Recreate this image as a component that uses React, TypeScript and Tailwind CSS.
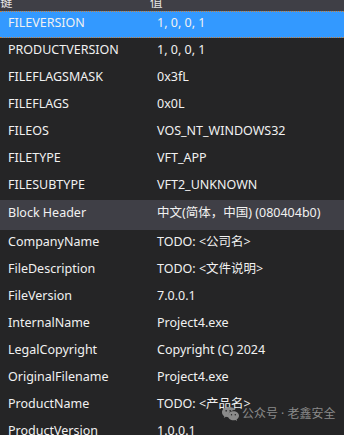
import React from "react";

type Row = { key: string; value: string; selected?: boolean; block?: boolean };

const rows: Row[] = [
  { key: "FILEVERSION", value: "1, 0, 0, 1", selected: true },
  { key: "PRODUCTVERSION", value: "1, 0, 0, 1" },
  { key: "FILEFLAGSMASK", value: "0x3fL" },
  { key: "FILEFLAGS", value: "0x0L" },
  { key: "FILEOS", value: "VOS_NT_WINDOWS32" },
  { key: "FILETYPE", value: "VFT_APP" },
  { key: "FILESUBTYPE", value: "VFT2_UNKNOWN" },
  { key: "Block Header", value: "中文(简体，中国) (080404b0)", block: true },
  { key: "CompanyName", value: "TODO: <公司名>" },
  { key: "FileDescription", value: "TODO: <文件说明>" },
  { key: "FileVersion", value: "7.0.0.1" },
  { key: "InternalName", value: "Project4.exe" },
  { key: "LegalCopyright", value: "Copyright (C) 2024" },
  { key: "OriginalFilename", value: "Project4.exe" },
  { key: "ProductName", value: "TODO: <产品名>" },
  { key: "ProductVersion", value: "1.0.0.1" },
];

const WeChatIcon = () => (
  <svg width="17" height="15" viewBox="0 0 34 30" className="shrink-0 fill-[#8a8a8a]">
    <path d="M12.5 2C5.6 2 0 6.6 0 12.3c0 3.2 1.8 6.1 4.6 8l-1.1 3.6 4.2-2.2c1.5.4 3.1.7 4.8.7h.9c-.3-1-.5-2-.5-3.1 0-6.3 5.9-11.2 13.2-11.2h.8C25.5 4 19.6 2 12.5 2z" />
    <path d="M34 19.4c0-5-5-9-11.1-9s-11.1 4-11.1 9 5 9 11.1 9c1.3 0 2.6-.2 3.8-.5l3.5 1.9-.9-3.1c2.8-1.7 4.7-4.3 4.7-7.3z" />
    <circle cx="8.4" cy="9.5" r="1.7" className="fill-[#252526]" />
    <circle cx="16.4" cy="9.5" r="1.7" className="fill-[#252526]" />
    <circle cx="19" cy="17.5" r="1.4" className="fill-[#252526]" />
    <circle cx="26.6" cy="17.5" r="1.4" className="fill-[#252526]" />
  </svg>
);

export default function App() {
  return (
    <div
      className="relative w-[344px] h-[435px] overflow-hidden bg-[#252526] text-[12.5px] text-[#f1f1f1]"
      style={{ fontFamily: '"Noto Sans", "Noto Sans CJK SC", sans-serif' }}
    >
      {/* column header, scrolled so only its lower part shows */}
      <div className="flex h-[11px] overflow-hidden bg-[#3f3f46] text-[#e6e6e6]">
        <div className="w-[150px] -mt-[6px] leading-[17px]">键</div>
        <div className="-mt-[6px] leading-[17px]">值</div>
      </div>

      {rows.map((r) => (
        <div
          key={r.key}
          className={
            r.selected
              ? "flex items-start border-y border-dotted border-[#c7803a] bg-[#3399ff] h-[27px] pt-[2px]"
              : r.block
              ? "flex items-start bg-[#3f3f46] h-[30px] pt-[4px]"
              : "flex items-start h-[27px] pt-[3px]"
          }
        >
          <div className="w-[157px] pl-[8px] leading-[17px] whitespace-nowrap">{r.key}</div>
          <div className="leading-[17px] whitespace-nowrap">{r.value}</div>
        </div>
      ))}

      {/* account watermark */}
      <div className="absolute left-[222px] top-[406px] flex items-center gap-[3px] whitespace-nowrap text-[12px] text-[#8a8a8a]">
        <WeChatIcon />
        <span className="leading-[15px]">公众号 · 老鑫安全</span>
      </div>
    </div>
  );
}
